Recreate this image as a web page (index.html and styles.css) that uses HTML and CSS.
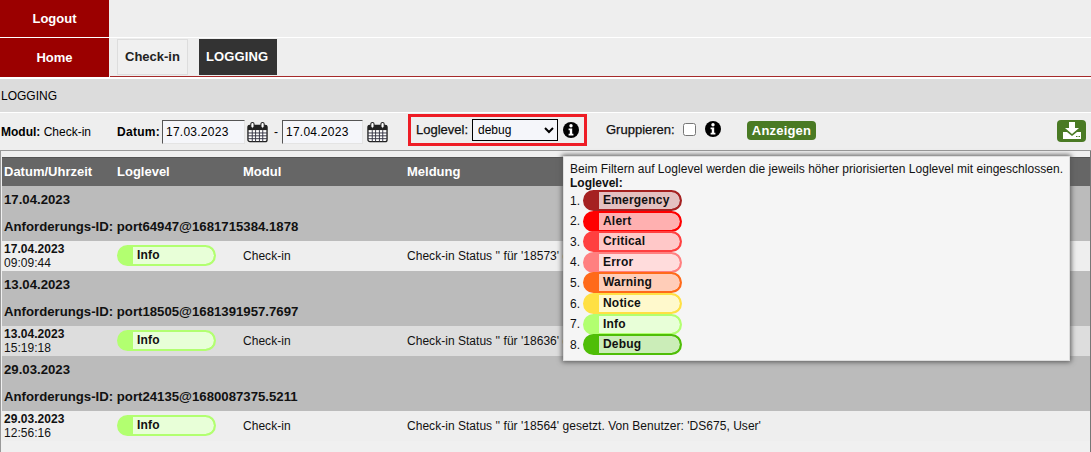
FILE: index.html
```html
<!DOCTYPE html>
<html lang="de">
<head>
<meta charset="utf-8">
<title>Logging</title>
<link rel="stylesheet" href="styles.css">
</head>
<body>
<svg class="defs" width="0" height="0">
  <defs>
    <symbol id="cal" viewBox="0 0 22 22">
      <rect x="1" y="4" width="20" height="17" rx="2" fill="#fff" stroke="#222" stroke-width="1.4"/>
      <rect x="1" y="4" width="20" height="5" fill="#222"/>
      <path d="M1 12h20M1 15h20M1 18h20M5.5 9v12M9 9v12M13 9v12M16.500 9v12" stroke="#334" stroke-width="1" fill="none"/>
      <rect x="4" y="1" width="3.400" height="6" rx="1.700" fill="#fff" stroke="#222" stroke-width="1.100"/>
      <rect x="14.600" y="1" width="3.400" height="6" rx="1.700" fill="#fff" stroke="#222" stroke-width="1.100"/>
    </symbol>
    <symbol id="info" viewBox="0 0 16 16">
      <circle cx="8" cy="8" r="8" fill="#000"/>
      <circle cx="8" cy="3.800" r="1.700" fill="#fff"/>
      <path d="M5.600 6.600h3.600v5.200h1.200v1.700H5.600v-1.700h1.200V8.300H5.600z" fill="#fff"/>
    </symbol>
  </defs>
</svg>
<div class="top">
  <a class="side">Logout</a>
  <div class="top-rest"></div>
</div>
<div class="nav">
  <a class="side side-home">Home</a>
  <div class="tabs">
    <a class="tab">Check-in</a>
    <a class="tab tab-active">LOGGING</a>
  </div>
</div>
<div class="title">LOGGING</div>
<div class="filters">
  <div class="f-modul"><b>Modul:</b> Check-in</div>
  <div class="f-datum">
    <b>Datum:</b>
    <input class="date" type="text" value="17.03.2023">
    <svg class="cal"><use href="#cal"/></svg>
    <span class="dash">-</span>
    <input class="date date-to" type="text" value="17.04.2023">
    <svg class="cal cal-to"><use href="#cal"/></svg>
  </div>
  <div class="f-level">
    <span class="lbl">Loglevel:</span>
    <select class="level"><option>debug</option></select>
    <svg class="info"><use href="#info"/></svg>
  </div>
  <div class="f-group">
    <span class="lbl">Gruppieren:</span>
    <input class="check" type="checkbox">
    <svg class="info"><use href="#info"/></svg>
  </div>
  <a class="show">Anzeigen</a>
  <a class="download">
    <svg width="20" height="17" viewBox="0 0 20 17"><path d="M7 0h6v6h4l-7 6-7-6h4z" fill="#fff"/><path d="M1 10h4l5 4 5-4h4v7H1z" fill="#fff"/><path d="M14 14.500h1.500M16.500 14.500H18" stroke="#4a7a24" stroke-width="1"/></svg>
  </a>
</div>
<div class="wrap">
  <table class="log">
    <colgroup><col class="c1"><col class="c2"><col class="c3"><col></colgroup>
    <thead>
      <tr><th>Datum/Uhrzeit</th><th>Loglevel</th><th>Modul</th><th>Meldung</th></tr>
    </thead>
    <tbody>
      <tr class="group"><td colspan="4">17.04.2023</td></tr>
      <tr class="group"><td colspan="4">Anforderungs-ID: port64947@1681715384.1878</td></tr>
      <tr class="row">
        <td><b>17.04.2023</b><br>09:09:44</td>
        <td><span class="badge b-info"><span>Info</span></span></td>
        <td>Check-in</td>
        <td>Check-in Status '' für '18573' gesetzt. Von Benutzer: 'DS675, User'</td>
      </tr>
      <tr class="group"><td colspan="4">13.04.2023</td></tr>
      <tr class="group"><td colspan="4">Anforderungs-ID: port18505@1681391957.7697</td></tr>
      <tr class="row row-alt">
        <td><b>13.04.2023</b><br>15:19:18</td>
        <td><span class="badge b-info"><span>Info</span></span></td>
        <td>Check-in</td>
        <td>Check-in Status '' für '18636' gesetzt. Von Benutzer: 'DS675, User'</td>
      </tr>
      <tr class="group"><td colspan="4">29.03.2023</td></tr>
      <tr class="group"><td colspan="4">Anforderungs-ID: port24135@1680087375.5211</td></tr>
      <tr class="row">
        <td><b>29.03.2023</b><br>12:56:16</td>
        <td><span class="badge b-info"><span>Info</span></span></td>
        <td>Check-in</td>
        <td>Check-in Status '' für '18564' gesetzt. Von Benutzer: 'DS675, User'</td>
      </tr>
    </tbody>
  </table>
</div>
<div class="pop">
  <div class="pop-t">Beim Filtern auf Loglevel werden die jeweils höher priorisierten Loglevel mit eingeschlossen.</div>
  <div class="pop-h">Loglevel:</div>
  <ol class="levels">
    <li><i>1.</i><span class="badge b-emergency"><span>Emergency</span></span></li>
    <li><i>2.</i><span class="badge b-alert"><span>Alert</span></span></li>
    <li><i>3.</i><span class="badge b-critical"><span>Critical</span></span></li>
    <li><i>4.</i><span class="badge b-error"><span>Error</span></span></li>
    <li><i>5.</i><span class="badge b-warning"><span>Warning</span></span></li>
    <li><i>6.</i><span class="badge b-notice"><span>Notice</span></span></li>
    <li><i>7.</i><span class="badge b-info"><span>Info</span></span></li>
    <li><i>8.</i><span class="badge b-debug"><span>Debug</span></span></li>
  </ol>
</div>
</body>
</html>
```
FILE: styles.css
```css
* { box-sizing: border-box; }
html, body { margin: 0; padding: 0; }
body {
  position: relative;
  width: 1091px;
  height: 452px;
  overflow: hidden;
  background: #fff;
  font: 12px "Liberation Sans", Arial, sans-serif;
  color: #000;
}
.defs { position: absolute; }
.top { display: flex; height: 38px; border-bottom: 1px solid #fff; background: #eee; }
.side {
  width: 109px;
  flex: none;
  display: flex;
  align-items: center;
  justify-content: center;
  background: #9b0000;
  color: #fff;
  font-weight: bold;
  font-size: 13px;
  margin-right: 1px;
}
.top-rest { flex: 1; }
.nav { display: flex; height: 39px; background: #eee; }
.side-home { height: 39px; }
.tabs {
  flex: 1;
  display: flex;
  gap: 11px;
  padding: 1px 0 0 7px;
  border-bottom: 1px solid #a52a2a;
}
.tab {
  height: 36px;
  padding: 0 7px 1px 7px;
  display: flex;
  align-items: center;
  font-size: 13px;
  font-weight: bold;
  color: #222;
  background: #f0f0f0;
  border: 1px solid #ddd;
}
.tab-active {
  background: #333;
  color: #fff;
  border-color: #333;
  padding: 0 8px 1px 6px;
  letter-spacing: .15px;
}
.title {
  margin-top: 2px;
  height: 33px;
  line-height: 34px;
  padding-left: 1px;
  background: #dcdcdc;
  font-size: 12px;
}
.filters {
  margin-top: 1px;
  height: 38px;
  padding-right: 5px;
  display: flex;
  align-items: center;
  background: #eee;
  border-bottom: 1px solid #999;
  position: relative;
}
.f-modul { width: 117px; padding-left: 1px; }
.f-datum { display: flex; align-items: center; width: 291px; }
.f-datum b { width: 45px; letter-spacing: .3px; }
.date {
  width: 83px;
  height: 24px;
  padding: 1px 3px;
  font: 12px "Liberation Sans", Arial, sans-serif;
  letter-spacing: .25px;
  color: #000;
  background: #f5f6fa;
  border: 1px solid #e4e4e4;
  border-top-color: #555;
  border-left-color: #555;
}
.cal { width: 21px; height: 22px; margin-left: 2px; flex: none; }
.cal-to { margin-left: 4px; }
.dash { margin: 0 4px 0 6px; }
.date-to { width: 81px; }
.f-level {
  width: 179px;
  height: 32px;
  margin-top: -4px;
  display: flex;
  align-items: center;
  border: 3px solid #ee1c25;
  padding: 0 5px;
  margin-right: 19px;
}
.lbl { font-size: 13px; margin-right: 3px; color: #111; -webkit-text-stroke: .25px #111; }
.f-level .lbl { width: 53px; flex: none; }
.level {
  width: 87px;
  height: 22px;
  font: 12px "Liberation Sans", Arial, sans-serif;
  background: #f5f6fa;
  border: 1px solid #000;
  padding-left: 1px;
}
.info { width: 16px; height: 16px; margin-left: 5px; flex: none; }
.f-group { display: flex; align-items: center; width: 141px; height: 31px; margin-top: -5px; }
.f-group .lbl { width: 69px; flex: none; }
.check { width: 13px; height: 13px; margin: 0 0 0 5px; }
.f-group .info { margin-left: 9px; }
.show {
  width: 69px;
  height: 19px;
  margin-top: -3px;
  border-radius: 4px;
  background: #4a7a24;
  color: #fff;
  font-weight: bold;
  font-size: 13px;
  letter-spacing: .2px;
  display: flex;
  align-items: center;
  justify-content: center;
}
.download {
  margin-left: auto;
  margin-top: -2px;
  width: 29px;
  height: 22px;
  border-radius: 4px;
  background: #4a7a24;
  display: flex;
  align-items: center;
  justify-content: center;
}
.wrap {
  height: 301px;
  padding: 6px 0 0 1px;
  background: #f0f0f0;
  border-left: 1px solid #999;
  border-right: 1px solid #777;
}
.log { width: 100%; border-collapse: collapse; table-layout: fixed; }
.c1 { width: 113px; }
.c2 { width: 126px; }
.c3 { width: 164px; }
.log th {
  height: 28px;
  padding: 0 2px;
  background: #666;
  color: #fff;
  text-align: left;
  font-size: 13px;
  border-top: 1px solid #555;
}
.group td {
  height: 27.500px;
  padding: 0 2px;
  background: #bbb;
  font-weight: bold;
  font-size: 13.200px;
  color: #111;
}
.row td {
  height: 30px;
  padding: 0 2px;
  background: #eee;
  line-height: 14px;
  color: #111;
  letter-spacing: .03px;
}
.row-alt td { background: #ddd; }
.row b { font-size: 12px; }
.badge {
  display: flex;
  width: 99px;
  height: 21px;
  border: 2px solid var(--c);
  border-radius: 11px;
  background: var(--c);
  overflow: hidden;
  font-weight: bold;
}
.badge span {
  flex: 1;
  margin-left: 14px;
  padding-left: 4px;
  background: var(--l);
  border-radius: 0 9px 9px 0;
  line-height: 17px;
  color: #111;
  font-size: 12px;
  letter-spacing: .2px;
}
.b-emergency { --c: #a52121; --l: #e4c0c0; }
.b-alert { --c: #ff0000; --l: #ffb0b0; }
.b-critical { --c: #ff4040; --l: #ffc8c8; }
.b-error { --c: #ff8080; --l: #ffdcdc; }
.b-warning { --c: #ff6a1a; --l: #ffcdb8; }
.b-notice { --c: #ffe044; --l: #fff9cc; }
.b-info { --c: #b2ff70; --l: #e8ffd8; }
.b-debug { --c: #4fbe07; --l: #cbedb8; }
.pop {
  position: absolute;
  left: 563px;
  top: 156px;
  width: 507px;
  height: 205px;
  padding: 5px 6px;
  background: #f5f5f5;
  border: 1px solid #ddd;
  box-shadow: 0 0 5px 1px #555;
  line-height: 14px;
  color: #111;
}
.pop-t { letter-spacing: .03px; white-space: nowrap; }
.pop-h { font-weight: bold; }
.levels { list-style: none; margin: .5px 0 0; padding: 0; }
.levels li { display: flex; align-items: center; height: 20.560px; }
.levels i { font-style: normal; width: 13px; }
```
